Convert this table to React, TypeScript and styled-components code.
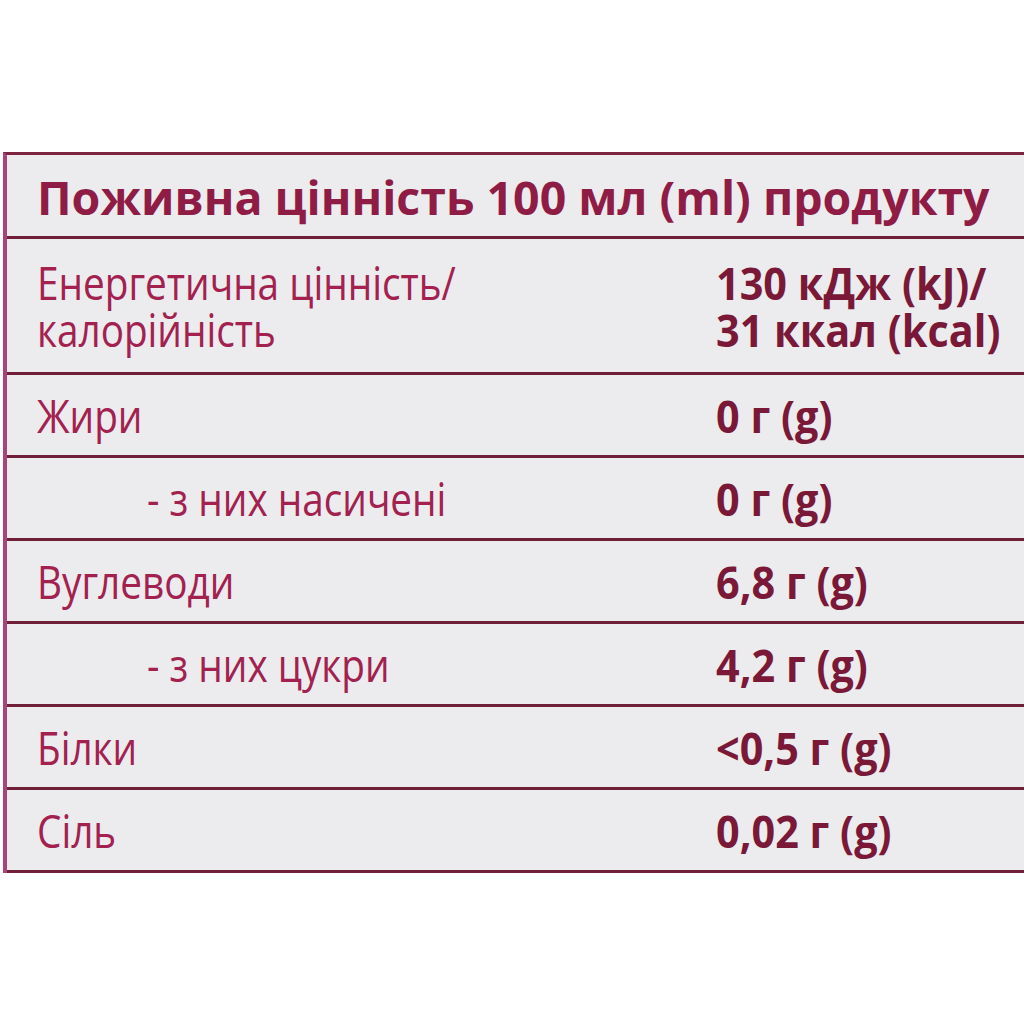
import { FunctionComponent } from "react";
import styled, { createGlobalStyle } from "styled-components";

const GlobalStyle = createGlobalStyle`
  html, body {
    margin: 0;
    padding: 0;
    background: #ffffff;
  }
  body {
    width: 1024px;
    height: 1024px;
    overflow: hidden;
    font-family: "Open Sans", "Noto Sans", sans-serif;
  }
`;

const Page = styled.div`
  padding-top: 152px;
  width: 1024px;
`;

const Table = styled.div`
  width: 1019px;
  margin-left: 3px;
  background-color: #ecebee;
  border-top: 3px solid #7d2540;
  border-left: 4px solid #a8447a;
  display: flex;
  flex-direction: column;
`;

const HeaderRow = styled.div`
  height: 84px;
  border-bottom: 3px solid #6f2038;
  display: flex;
  align-items: center;
  padding-left: 30px;
  padding-top: 2px;
  box-sizing: border-box;
`;

const HeaderText = styled.div`
  font-weight: 700;
  font-size: 46px;
  color: #8f1c45;
  white-space: nowrap;
  transform: scaleX(1.01);
  transform-origin: left center;
`;

const Row = styled.div<{ $tall?: boolean }>`
  height: ${(p) => (p.$tall ? 136 : 83)}px;
  border-bottom: 3px solid #6f2038;
  display: grid;
  grid-template-columns: 679px 1fr;
  align-items: center;
  box-sizing: border-box;
  padding-left: 30px;
`;

const Label = styled.div<{ $indent?: boolean }>`
  padding-left: ${(p) => (p.$indent ? 128 : 0)}px;
  font-size: 45px;
  line-height: 47px;
  color: #a2214f;
  white-space: nowrap;
  transform: scaleX(0.86);
  transform-origin: left center;
`;

const Value = styled.div`
  font-size: 45px;
  font-weight: 700;
  line-height: 47px;
  color: #7a1838;
  white-space: nowrap;
  transform: scaleX(0.92);
  transform-origin: left center;
`;

const rows: { label: string[]; value: string[]; indent?: boolean }[] = [
  {
    label: ["Енергетична цінність/", "калорійність"],
    value: ["130 кДж (kJ)/", "31 ккал (kcal)"],
  },
  { label: ["Жири"], value: ["0 г (g)"] },
  { label: ["- з них насичені"], value: ["0 г (g)"], indent: true },
  { label: ["Вуглеводи"], value: ["6,8 г (g)"] },
  { label: ["- з них цукри"], value: ["4,2 г (g)"], indent: true },
  { label: ["Білки"], value: ["<0,5 г (g)"] },
  { label: ["Сіль"], value: ["0,02 г (g)"] },
];

const App: FunctionComponent = () => {
  return (
    <Page>
      <GlobalStyle />
      <Table>
        <HeaderRow>
          <HeaderText>Поживна цінність 100 мл (ml) продукту</HeaderText>
        </HeaderRow>
        {rows.map((r, i) => (
          <Row key={i} $tall={r.label.length > 1}>
            <Label $indent={r.indent}>
              {r.label.map((l, j) => (
                <div key={j}>{l}</div>
              ))}
            </Label>
            <Value>
              {r.value.map((v, j) => (
                <div key={j}>{v}</div>
              ))}
            </Value>
          </Row>
        ))}
      </Table>
    </Page>
  );
};

export default App;
